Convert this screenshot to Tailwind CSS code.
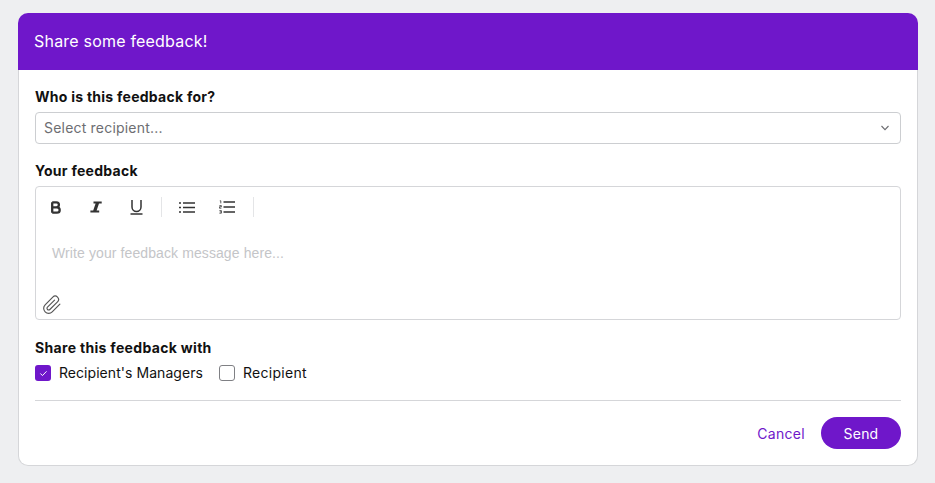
<!doctype html>
<html>
<head>
<meta charset="utf-8">
<script src="https://cdn.jsdelivr.net/npm/@tailwindcss/browser@4"></script>
</head>
<body class="h-[483px] overflow-hidden bg-[#eeeff1] font-['Inter','Lato',sans-serif] text-[#111]">
<div class="pt-[13px] pl-[18px]">
  <div class="w-[900px] h-[453px] flex flex-col">
    <div class="h-[57px] rounded-t-[10px] bg-[#6f17ca] flex items-center pl-[16px] pb-[1px] text-white text-[16px] tracking-[0.2px] leading-none">Share some feedback!</div>
    <div class="flex-1 bg-white rounded-b-[10px] border border-t-0 border-[#d5d6d9] px-[16px] pt-[18px]">
      <label class="block text-[14px] leading-[18px] font-bold tracking-[0.26px]">Who is this feedback for?</label>
      <div class="mt-[6px] h-[32px] rounded-[4px] border border-[#ccced1] flex items-center justify-between pl-[8px] pr-[11px] pb-[1px] text-[14px] tracking-[0.2px] text-[#6d6e72]">
        <span>Select recipient...</span>
        <svg width="8" height="6" viewBox="0 0 8 6" fill="none" stroke="#6b6c70" stroke-width="1.1"><path d="M.5 1l3.500 3.600L7.500 1"/></svg>
      </div>
      <label class="block mt-[18px] text-[14px] leading-[18px] font-bold tracking-[0.28px]">Your feedback</label>
      <div class="mt-[6px] h-[134px] rounded-[4px] border border-[#d5d6d9] flex flex-col">
        <div class="h-[40px] flex items-center text-[#333]">
          <div class="w-[40px] flex justify-center">
            <svg width="12" height="13" viewBox="0 0 12 13" fill="none" stroke="#333" stroke-width="2.3"><path d="M2.200 1.300v10.400M2.200 1.300h4.200a2.500 2.500 0 0 1 0 5H2.200M2.200 6.300h4.800a2.700 2.700 0 0 1 0 5.400H2.200"/></svg>
          </div>
          <div class="w-[40px] flex justify-center">
            <svg width="12" height="12" viewBox="0 0 12 12" fill="#333" stroke="none"><path d="M3.500 .5h8.200v2H9L6.600 9.500h2.600v2H.4v-2h2.800L5.600 2.500H3.500z"/></svg>
          </div>
          <div class="w-[40px] flex justify-center">
            <svg width="13" height="16" viewBox="0 0 13 16" fill="none" stroke="#333" stroke-width="1.5"><path d="M2 1v7a4.500 4.500 0 0 0 9 0V1"/><path d="M.5 15h12"/></svg>
          </div>
          <div class="w-px h-[20px] bg-[#e4e5e7] ml-[5px]"></div>
          <div class="w-[38px] ml-[6px] flex justify-center">
            <svg width="16" height="13" viewBox="0 0 16 13" fill="none" stroke="#333" stroke-width="1.3"><path d="M4 2h12M4 6.500h12M4 11h12"/><path d="M0 2h2M0 6.500h2M0 11h2" stroke-width="1.5"/></svg>
          </div>
          <div class="w-[38px] ml-[2px] flex justify-center">
            <svg width="16" height="14" viewBox="0 0 16 14" fill="none" stroke="#333" stroke-width="1.3"><path d="M4.500 2h11.500M4.500 7h11.500M4.500 12h11.500"/><path d="M.8 .8h1v2.600M.4 5.600h2v1.200h-2v1.400h2M.4 10.600h2v2.600h-2M.8 11.900h1.600" stroke-width=".8"/></svg>
          </div>
          <div class="w-px h-[20px] bg-[#e4e5e7] ml-[7px]"></div>
        </div>
        <div class="pl-[16px] pt-[17px] text-[14px] tracking-[0.1px] leading-[18px] text-[#c4c5c8] font-['Liberation_Sans',sans-serif]">Write your feedback message here...</div>
        <div class="mt-auto pl-[6px] pb-[4px]">
          <svg width="20" height="20" viewBox="0 0 24 24" fill="none" stroke="#555" stroke-width="1.4" stroke-linecap="round" stroke-linejoin="round"><path d="M21.440 11.050l-9.190 9.190a6 6 0 0 1-8.490-8.490l9.190-9.190a4 4 0 0 1 5.660 5.660l-9.200 9.190a2 2 0 0 1-2.830-2.830l8.490-8.480"/></svg>
        </div>
      </div>
      <label class="block mt-[19px] text-[14px] leading-[18px] font-bold tracking-[0.32px]">Share this feedback with</label>
      <div class="mt-[7px] flex items-center text-[14px] leading-[18px] tracking-[0.05px]">
        <span class="w-[16px] h-[16px] rounded-[3px] bg-[#6f17ca] flex items-center justify-center">
          <svg width="9" height="7" viewBox="0 0 10 8" fill="none" stroke="#fff" stroke-width="1.1"><path d="M1.500 4l2.300 2.400L8.500 1.500"/></svg>
        </span>
        <span class="ml-[8px]">Recipient's Managers</span>
        <span class="ml-[16px] w-[16px] h-[16px] rounded-[3px] border border-[#7f8084]"></span>
        <span class="ml-[8px] tracking-[0.3px]">Recipient</span>
      </div>
      <div class="mt-[18px] h-px bg-[#d5d6d9]"></div>
      <div class="mt-[16px] flex items-center justify-end">
        <a class="text-[14px] tracking-[0.3px] text-[#6f17ca]">Cancel</a>
        <button class="ml-[16px] w-[80px] h-[32px] rounded-full bg-[#6f17ca] text-white text-[14px] font-normal tracking-[0.2px]">Send</button>
      </div>
    </div>
  </div>
</div>
</body>
</html>
